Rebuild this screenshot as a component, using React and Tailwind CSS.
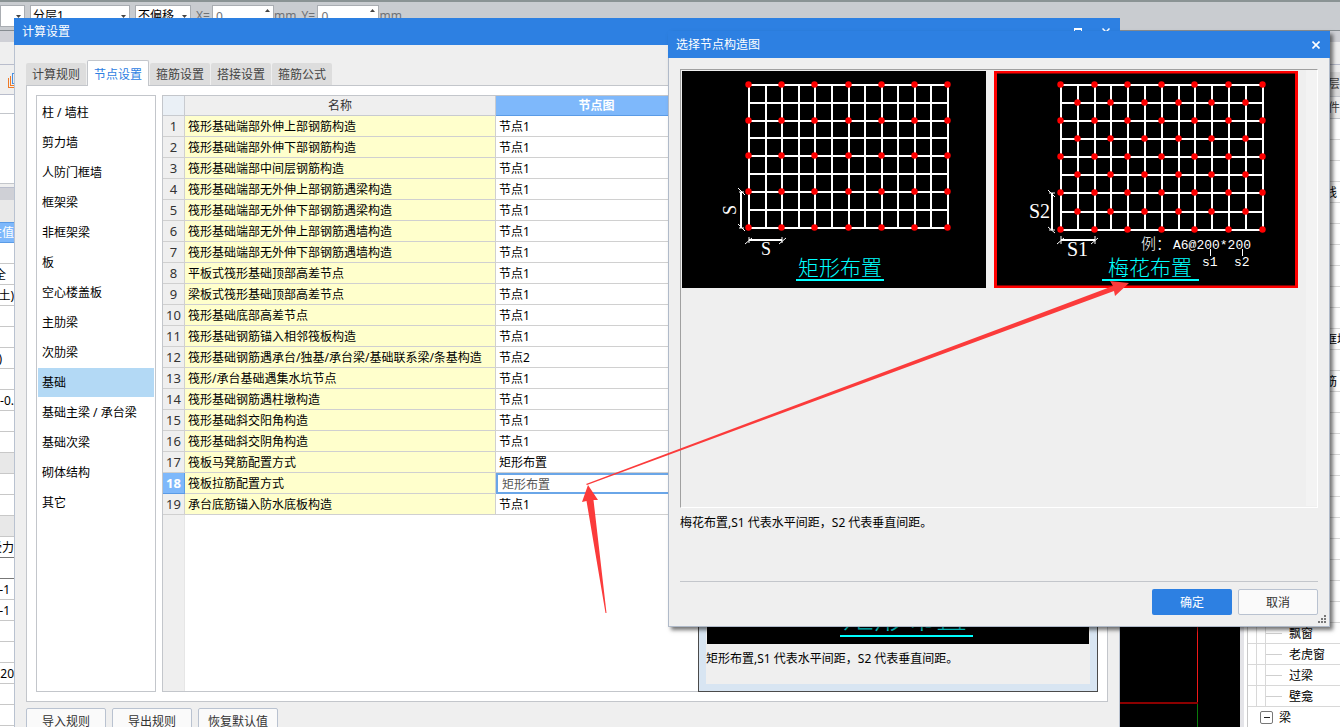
import { useState } from "react";
import clsx from "clsx";

const TABS = ["计算规则", "节点设置", "箍筋设置", "搭接设置", "箍筋公式"];

const CATEGORIES = [
  "柱 / 墙柱",
  "剪力墙",
  "人防门框墙",
  "框架梁",
  "非框架梁",
  "板",
  "空心楼盖板",
  "主肋梁",
  "次肋梁",
  "基础",
  "基础主梁 / 承台梁",
  "基础次梁",
  "砌体结构",
  "其它",
];

const NODES = [
  ["筏形基础端部外伸上部钢筋构造", "节点1"],
  ["筏形基础端部外伸下部钢筋构造", "节点1"],
  ["筏形基础端部中间层钢筋构造", "节点1"],
  ["筏形基础端部无外伸上部钢筋遇梁构造", "节点1"],
  ["筏形基础端部无外伸下部钢筋遇梁构造", "节点1"],
  ["筏形基础端部无外伸上部钢筋遇墙构造", "节点1"],
  ["筏形基础端部无外伸下部钢筋遇墙构造", "节点1"],
  ["平板式筏形基础顶部高差节点", "节点1"],
  ["梁板式筏形基础顶部高差节点", "节点1"],
  ["筏形基础底部高差节点", "节点1"],
  ["筏形基础钢筋锚入相邻筏板构造", "节点1"],
  ["筏形基础钢筋遇承台/独基/承台梁/基础联系梁/条基构造", "节点2"],
  ["筏形/承台基础遇集水坑节点", "节点1"],
  ["筏形基础钢筋遇柱墩构造", "节点1"],
  ["筏形基础斜交阳角构造", "节点1"],
  ["筏形基础斜交阴角构造", "节点1"],
  ["筏板马凳筋配置方式", "矩形布置"],
  ["筏板拉筋配置方式", "矩形布置"],
  ["承台底筋锚入防水底板构造", "节点1"],
];

const PROPERTY_ROWS = [
  "", "全", "土)", "", "", ")", "", "-0.", "", "", "group", "", "",
  "group", "受力", "dark", "-1", "-1", "", "", ",20", "", "", "",
];

// component tree on the right, one entry for each 21px row
const TREE_ROWS = [
  "", "", "", "辅助轴线", "", "", "", "", "", "", "人防门框墙", "",
  "砌体加筋", "", "", "", "", "", "", "", "", "", "", "",
  "飘窗", "老虎窗", "过梁", "壁龛",
];

const RECT_GRID = {
  xs: [67, 84, 100, 117, 133, 150, 167, 183, 200, 216, 233, 249, 266],
  ys: [14, 32, 50, 67, 85, 103, 121, 139, 157],
};

const PLUM_GRID = {
  xs: [67, 84, 101, 117, 134, 151, 168, 185, 201, 218, 235, 252, 269],
  ys: [14, 32, 50, 68, 86, 104, 122, 141, 159],
};

function ToolbarSelect({ label, value, className }) {
  return (
    <span className={clsx("relative h-[22px]", className)}>
      <select
        aria-label={label}
        className="block h-full w-full appearance-none border border-[#a9adb2] bg-white pl-0.5 text-xs text-black">
        <option>{value}</option>
      </select>
      <svg className="pointer-events-none absolute top-2.5 right-1 h-[3px] w-[5px]" viewBox="0 0 5 3">
        <path d="M0 0h5L2.5 3z" fill="#444" />
      </svg>
    </span>
  );
}

function OffsetInput({ id, label }) {
  return (
    <span className="flex items-center text-[#6f7276]">
      <label htmlFor={id} className="w-4">
        {label}=
      </label>
      <span className="relative h-[22px] w-[62px]">
        <input
          id={id}
          defaultValue="0"
          className="block h-full w-full border border-[#a9adb2] bg-white pl-[3px] outline-none"
        />
        <svg className="absolute top-1 right-1 h-[3px] w-[5px]" viewBox="0 0 5 3">
          <path d="M0 3h5L2.5 0z" fill="#444" />
        </svg>
      </span>
      <span>mm</span>
    </span>
  );
}

function Toolbar() {
  return (
    <div className="flex h-[31px] shrink-0 items-start gap-[5px] border-t-2 border-b border-t-[#8a9394] border-b-[#868c91] bg-[#c9ccd0] pt-[3px] text-xs">
      <ToolbarSelect label="楼层" value="" className="w-[25px]" />
      <ToolbarSelect label="分层" value="分层1" className="w-[100px]" />
      <ToolbarSelect label="偏移" value="不偏移" className="w-14" />
      <OffsetInput id="offset-x" label="X" />
      <OffsetInput id="offset-y" label="Y" />
    </div>
  );
}

function PropertyPanel() {
  return (
    <aside className="flex w-3.5 shrink-0 flex-col overflow-hidden bg-white">
      <div className="h-[11px] shrink-0 bg-[#cfd0d6]" />
      <div className="h-[23px] shrink-0 border-b border-[#b9bdcc] bg-[#efefef]" />
      <div className="flex h-[30px] shrink-0 items-center justify-end border-b border-[#b9bdcc] bg-[#efefef]">
        <svg className="shrink-0" width="6" height="16" viewBox="0 0 6 16" fill="none" shapeRendering="crispEdges">
          <path d="M0.5 6v9.5H6M2.5 4v9.5H6" stroke="#ee7a28" />
          <path d="M4.5 1v10.5H6M4 1.5H6" stroke="#4a8fe0" />
        </svg>
      </div>
      <div className="h-[19px] shrink-0 border-b border-[#c3c6cb]" />
      <div className="h-[70px] shrink-0 border-b border-[#c3c6cb]" />
      <div className="h-1 shrink-0 border-b border-[#b9bdcc] bg-[#efefef]" />
      <div className="h-3 shrink-0 bg-[#cfd0d6]" />
      <div className="h-[22px] shrink-0 bg-[#e9e9e9]" />
      <div className="flex h-[21px] shrink-0 items-center justify-end overflow-hidden border-y border-[#5a9be6] bg-[#7eb8fb] text-white">
        <span className="whitespace-nowrap">性值</span>
      </div>
      {PROPERTY_ROWS.map((row, i) => (
        <div
          key={i}
          className={clsx(
            "flex h-[21px] shrink-0 items-center justify-end overflow-hidden border-b pt-px whitespace-nowrap",
            row === "group" && "bg-[#e8e8e8]",
            row === "-1" && "pr-1",
            row === "全" && "pr-2",
            row === ")" && "pr-3",
            row === "dark" || PROPERTY_ROWS[i + 1] === "dark" ? "border-[#777]" : "border-[#c8c8c8]"
          )}>
          {row !== "group" && row !== "dark" && row}
        </div>
      ))}
    </aside>
  );
}

function ComponentTree() {
  return (
    <aside className="flex w-[100px] shrink-0 flex-col overflow-hidden border-l-4 border-[#e4e4e8] bg-white">
      <div className="h-[11px] shrink-0 bg-[#cfd0d6]" />
      <div className="h-[23px] shrink-0 border-b border-[#b9bdcc] bg-[#efefef]" />
      <div className="h-[7px] shrink-0 bg-[#efefef]" />
      <div className="flex h-6 shrink-0 items-center justify-end bg-[#dcdcdc] text-[#444]">楼层</div>
      <div className="flex h-[23px] shrink-0 items-center justify-end border-y border-[#c3c6cb] bg-[#efefef] text-[#444]">
        构件
      </div>
      <ul className="ml-[3px] border-l border-[#c8c8c8]">
        {TREE_ROWS.map((row, i) => (
          <li key={i} className="flex h-[21px] items-center border-b border-[#d8d8d8] pl-2">
            <span className="flex h-full w-2.5 shrink-0 border-x border-[#d8d8d8]" />
            <span className="h-px w-4 shrink-0 bg-[#cfcfcf]" />
            <span className="ml-[7px] pt-px whitespace-nowrap">{row}</span>
          </li>
        ))}
        <li className="flex h-[21px] items-center gap-1.5 pl-3">
          <button
            type="button"
            aria-label="折叠"
            className="flex h-[13px] w-[13px] items-center justify-center rounded-xs border border-[#777] bg-white">
            <span className="h-px w-1.5 bg-[#222]" />
          </button>
          梁
        </li>
      </ul>
    </aside>
  );
}

function DrawingCanvas() {
  return (
    <main className="flex flex-1 items-end justify-end bg-black">
      <svg width="120" height="100" viewBox="0 0 120 100" shapeRendering="crispEdges">
        <path d="M77.5 0v75" stroke="#f01818" />
        <path d="M77.5 75v25" stroke="#0a7a0a" />
        <path d="M0 76h78" stroke="#8b0000" strokeWidth="2" />
      </svg>
    </main>
  );
}

function Grid({ xs, ys, staggered }) {
  const right = xs[xs.length - 1] + 1;
  const bottom = ys[ys.length - 1] + 1;

  return (
    <>
      <g stroke="#fff" strokeWidth="2" shapeRendering="crispEdges">
        {xs.map((x) => (
          <path key={x} d={`M${x} 13V${bottom}`} />
        ))}
        {ys.map((y) => (
          <path key={y} d={`M66 ${y}H${right}`} />
        ))}
      </g>
      {ys.map((y, r) =>
        xs.map((x, c) => {
          const even = r % 2 === 0 && c % 2 === 0;
          const odd = r % 2 === 1 && c % 2 === 1;
          if (!even && !(staggered && odd)) return null;
          return <circle key={`${r}-${c}`} cx={x - 0.5} cy={y - 0.5} r="3.2" fill="#f00" />;
        })
      )}
    </>
  );
}

function RectFigure() {
  return (
    <svg className="block h-[217px] w-[304px] bg-black" viewBox="0 0 304 217">
      <Grid {...RECT_GRID} />
      <path d="M59 121v36" stroke="#fff" strokeWidth="2" />
      <path d="M56 117l7 7M56 153l7 7M57 121h5M57 157h5" stroke="#fff" />
      <path d="M67 169h33" stroke="#fff" strokeWidth="2" />
      <path d="M63 173l7-6M97 173l7-6M67 166v6M100 166v6" stroke="#fff" />
      <text
        transform="translate(54 144) rotate(-90)"
        fill="#fff"
        className="font-['Liberation_Serif',serif] text-[18px]">
        S
      </text>
      <text x="79" y="184" fill="#fff" className="font-['Liberation_Serif',serif] text-[18px]">
        S
      </text>
      <text x="116" y="204" fill="#0ff" className="font-['Noto_Sans_CJK_SC',sans-serif] text-[21px] font-light">
        矩形布置
      </text>
      <path d="M114 209h88" stroke="#0ff" strokeWidth="2" />
    </svg>
  );
}

function PlumFigure() {
  return (
    <svg className="block h-[217px] w-[304px] bg-black" viewBox="0 0 304 217">
      <Grid {...PLUM_GRID} staggered />
      <path d="M58 122v37" stroke="#fff" strokeWidth="2" />
      <path d="M54 119l7 7M54 156l7 6M55 122h6M55 159h6" stroke="#fff" />
      <path d="M67 169h34" stroke="#fff" strokeWidth="2" />
      <path d="M63 173l7-6M97 173l7-6M67 165v8M101 165v8" stroke="#fff" />
      <g fill="#fff" className="font-['Liberation_Serif',serif] text-[20px]">
        <text x="35" y="147">S2</text>
        <text x="73" y="185">S1</text>
      </g>
      <g fill="#fff" className="font-['Liberation_Mono','Noto_Sans_CJK_SC',monospace] text-[13px]">
        <text x="147" y="178" className="text-[15px] font-light">
          例：
        </text>
        <text x="179" y="178">A6@200*200</text>
        <text x="208" y="195">s1</text>
        <text x="240" y="195">s2</text>
      </g>
      <path d="M216.5 178v7M248.5 178v7" stroke="#fff" />
      <text x="114" y="204" fill="#0ff" className="font-['Noto_Sans_CJK_SC',sans-serif] text-[21px] font-light">
        梅花布置
      </text>
      <path d="M108 209h97" stroke="#0ff" strokeWidth="2" />
      <path d="M1.5 1H302.5V216H1.5z" fill="none" stroke="#f00" strokeWidth="3" />
    </svg>
  );
}

function PreviewPane() {
  return (
    <div className="absolute -right-px -bottom-px w-[400px] border border-[#4a4a4a] bg-[#d8e5f2] p-[7px]">
      <div className="bg-[#efefef] pb-4">
        <svg className="mx-px block h-[273px] w-[382px] bg-black" viewBox="0 0 382 273">
          <text
            x="136"
            y="257"
            fill="#0ff"
            className="font-['Noto_Sans_CJK_SC',sans-serif] text-[31px] font-light">
            矩形布置
          </text>
          <path d="M133 265h133" stroke="#0ff" strokeWidth="2" />
        </svg>
        <p className="pt-1.5 leading-[18px]">矩形布置,S1 代表水平间距，S2 代表垂直间距。</p>
      </div>
    </div>
  );
}

function NodeTable() {
  return (
    <div className="relative flex min-w-0 flex-1 flex-col border border-[#c3c6cb] bg-white">
      <table className="w-[534px] table-fixed border-separate border-spacing-0 leading-[18px]">
        <colgroup>
          <col className="w-[22px]" />
          <col className="w-[311px]" />
          <col className="w-[201px]" />
        </colgroup>
        <thead>
          <tr className="h-5 text-center">
            <th className="border-r border-b border-[#c8cbd0] bg-[#eaf0f6] p-0" />
            <th className="border-r border-b border-[#c8cbd0] bg-[#efefef] p-0 pt-px font-normal text-[#333]">名称</th>
            <th className="border-b border-[#5a9be6] bg-[#7eb8fb] p-0 pt-px font-bold text-white">节点图</th>
          </tr>
        </thead>
        <tbody>
          {NODES.map(([name, node], i) => {
            const selected = i === 17;
            return (
              <tr key={name} className="h-[21px]">
                <th
                  scope="row"
                  className={clsx(
                    "border-r border-b p-0 text-center text-[13px]",
                    selected
                      ? "border-[#5a9be6] bg-[#7eb8fb] font-bold text-white"
                      : "border-[#d0d0d0] bg-[#efefef] font-normal text-[#333]"
                  )}>
                  {i + 1}
                </th>
                <td className="overflow-hidden border-r border-b border-[#d0d0d0] bg-[#ffffcc] p-0 pt-0.5 pl-[3px] whitespace-nowrap">
                  {name}
                </td>
                {selected ? (
                  <td className="p-0">
                    <input
                      aria-label={name}
                      defaultValue={node}
                      className="block h-[21px] w-full border-2 border-[#6aa6e8] bg-white pl-1 text-[#555] outline-none"
                    />
                  </td>
                ) : (
                  <td className="border-b border-[#d0d0d0] p-0 pt-0.5 pl-[3px]">{node}</td>
                )}
              </tr>
            );
          })}
        </tbody>
      </table>
      <div className="w-[22px] flex-1 border-r border-[#e6e6e6] bg-[#efefef]" />
      <PreviewPane />
    </div>
  );
}

function SettingsWindow() {
  const [tab, setTab] = useState("节点设置");
  const [category, setCategory] = useState("基础");

  return (
    <section className="absolute top-[18px] right-[220px] -bottom-5 left-3.5 flex flex-col border-x border-[#b9c2d0] bg-[#efefef]">
      <header className="-mx-px flex h-[27px] shrink-0 items-center bg-[#2d80e2] pr-2.5 pl-2 text-white">
        <h2 className="flex-1">计算设置</h2>
        <button type="button" aria-label="最大化" className="mr-5 h-2 w-2 border border-t-2 border-white" />
        <button type="button" aria-label="关闭" className="w-2">
          <svg width="8" height="8" viewBox="0 0 8 8">
            <path d="M.5 .5l7 7M7.5 .5l-7 7" stroke="#fff" strokeWidth="1.5" />
          </svg>
        </button>
      </header>

      <div className="flex min-h-0 flex-1 flex-col px-[11px] pt-[15px] pb-[13px]">
        {/* tabs */}
        <div role="tablist" className="flex items-end gap-px">
          {TABS.map((name) => (
            <button
              key={name}
              type="button"
              role="tab"
              aria-selected={tab === name}
              onClick={() => setTab(name)}
              className={clsx(
                "rounded-t-xs px-1.5 pt-0.5",
                tab === name
                  ? "relative -mb-px h-[26px] border border-b-0 border-[#c3c6cb] bg-white text-[#2d80e2]"
                  : "h-[22px] bg-[#dddddd] text-[#444]"
              )}>
              {name}
            </button>
          ))}
        </div>

        <div className="flex min-h-0 flex-1 gap-1.5 border border-[#c3c6cb] bg-white p-[9px]">
          <ul className="w-[120px] shrink-0 border border-[#c3c6cb] p-px">
            {CATEGORIES.map((name) => (
              <li key={name}>
                <button
                  type="button"
                  onClick={() => setCategory(name)}
                  className={clsx(
                    "mt-px block h-[29px] w-full px-1 pt-px text-left whitespace-nowrap",
                    category === name && "bg-[#b3d9f5]"
                  )}>
                  {name}
                </button>
              </li>
            ))}
          </ul>
          <NodeTable />
        </div>

        <div className="mt-1.5 flex gap-1.5">
          {["导入规则", "导出规则", "恢复默认值"].map((name) => (
            <button
              key={name}
              type="button"
              className="h-[26px] w-20 rounded-xs border border-[#b9c2d0] bg-[#fafafa] pt-0.5 text-[#333]">
              {name}
            </button>
          ))}
        </div>
      </div>
    </section>
  );
}

function NodePickerWindow() {
  return (
    <section className="absolute top-[31px] right-2.5 left-[668px] border border-t-0 border-[#b0bac9] bg-[#efefef] shadow-[3px_3px_4px_rgba(0,0,0,0.55)]">
      <header className="-mx-px flex h-[27px] items-center justify-between bg-[#2d80e2] px-2 text-white">
        <h2>选择节点构造图</h2>
        <button type="button" aria-label="关闭" className="mr-0.5">
          <svg width="8" height="8" viewBox="0 0 8 8">
            <path d="M.5 .5l7 7M7.5 .5l-7 7" stroke="#fff" strokeWidth="1.6" />
          </svg>
        </button>
      </header>

      <div className="px-[11px] pt-[11px]">
        <div className="flex h-[439px] items-start gap-2 border border-t-[#a0a0a0] border-r-white border-b-white border-l-[#a0a0a0] pt-px pl-px">
          <button type="button" aria-label="矩形布置">
            <RectFigure />
          </button>
          <button type="button" aria-label="梅花布置">
            <PlumFigure />
          </button>
          <div className="-mt-px ml-auto h-full w-3.5 bg-[#f3f3f3]" />
        </div>
        <p className="mt-1.5 h-[67px] leading-[18px]">梅花布置,S1 代表水平间距，S2 代表垂直间距。</p>
        <div className="flex justify-end gap-1.5 border-t border-[#c3c6cb] pt-[7px]">
          <button type="button" className="h-[26px] w-20 rounded-xs bg-[#2d80e2] pt-0.5 text-white">
            确定
          </button>
          <button
            type="button"
            className="h-[26px] w-20 rounded-xs border border-[#b9c2d0] bg-[#fafafa] pt-0.5 text-[#333]">
            取消
          </button>
        </div>
      </div>

      {/* resize grip */}
      <svg className="mr-[3px] mb-[3px] ml-auto block" width="8" height="8" viewBox="0 0 8 8" fill="#777">
        <path d="M6 0h2v2H6zM3 3h2v2H3zM6 3h2v2H6zM0 6h2v2H0zM3 6h2v2H3zM6 6h2v2H6z" />
      </svg>
    </section>
  );
}

function Arrows() {
  return (
    <svg className="pointer-events-none absolute top-0 left-0 h-[727px] w-[1340px]" viewBox="0 0 1340 727" fill="#fb3b3b">
      <path d="M586 484L1113 286L1110 281L1129 283L1115 296L1114 291L587 485z" />
      <path d="M588 485L598 500L593.5 500L606.5 613L605.5 613L586.5 501L582 502z" />
    </svg>
  );
}

export default function App() {
  return (
    <div className="relative flex h-screen flex-col overflow-hidden bg-white font-['Noto_Sans','Noto_Sans_CJK_SC',sans-serif] text-xs text-black">
      <Toolbar />
      <div className="flex min-h-0 flex-1">
        <PropertyPanel />
        <DrawingCanvas />
        <ComponentTree />
      </div>
      <SettingsWindow />
      <NodePickerWindow />
      <Arrows />
    </div>
  );
}
